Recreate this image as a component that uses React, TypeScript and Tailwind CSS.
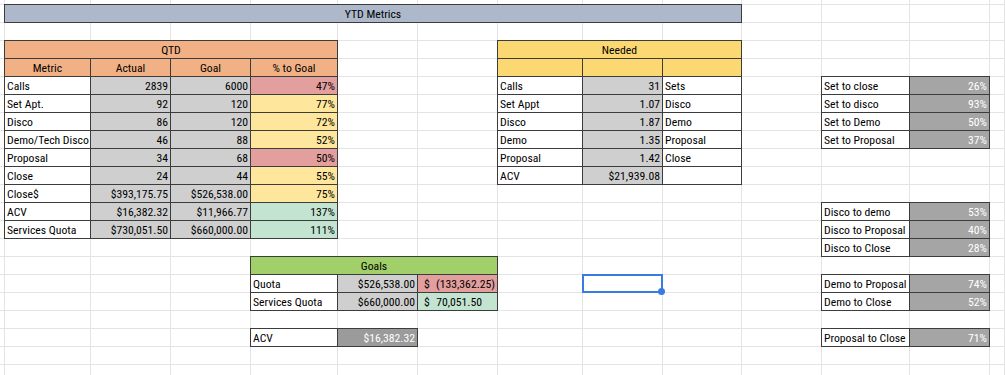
import React from "react";

type Col = "A" | "B" | "C" | "D" | "E" | "F" | "G" | "H" | "I" | "J" | "K" | "L";

// sheet column -> grid column (grid col 1 is the 5px sliver on the left)
const COL: Record<Col, string> = {
  A: "col-start-2",
  B: "col-start-3",
  C: "col-start-4",
  D: "col-start-5",
  E: "col-start-6",
  F: "col-start-7",
  G: "col-start-8",
  H: "col-start-9",
  I: "col-start-10",
  J: "col-start-11",
  K: "col-start-12",
  L: "col-start-13",
};

// sheet row -> grid row (grid row 1 is the 5px sliver on top)
const ROW: Record<number, string> = {
  1: "row-start-2",
  3: "row-start-4",
  4: "row-start-5",
  5: "row-start-6",
  6: "row-start-7",
  7: "row-start-8",
  8: "row-start-9",
  9: "row-start-10",
  10: "row-start-11",
  11: "row-start-12",
  12: "row-start-13",
  13: "row-start-14",
  14: "row-start-15",
  15: "row-start-16",
  16: "row-start-17",
  17: "row-start-18",
  19: "row-start-20",
};

const GRID =
  "grid grid-cols-[5px_86px_80px_80px_87px_80px_80px_85px_80px_79px_80px_88px_80px_1fr] grid-rows-[5px_repeat(21,18px)]";

const GRAY = "bg-[#cfcfcf]";
const DARK = "bg-[#a5a5a5] text-white";
const RED = "bg-[#e39e9e]";
const YELLOW = "bg-[#fee69c]";
const GREEN = "bg-[#c4e4d2]";
const ORANGE = "bg-[#f2b185]";
const GOLD = "bg-[#fcd873]";

type Align = "left" | "right" | "center" | "between";

const JUSTIFY: Record<Align, string> = {
  left: "justify-start",
  right: "justify-end",
  center: "justify-center",
  between: "justify-between",
};

function Cell({
  at,
  bg = "bg-white",
  align = "left",
  className = "px-[2px]",
  children,
}: {
  at: string;
  bg?: string;
  align?: Align;
  className?: string;
  children?: React.ReactNode;
}) {
  return (
    <div
      className={`${at} ${bg} ${JUSTIFY[align]} -ml-px -mt-px flex items-end whitespace-nowrap border border-[#3c3c3c] leading-[16px] ${className}`}
    >
      {children}
    </div>
  );
}

const qtd: [string, string, string, string, string][] = [
  ["Calls", "2839", "6000", "47%", RED],
  ["Set Apt.", "92", "120", "77%", YELLOW],
  ["Disco", "86", "120", "72%", YELLOW],
  ["Demo/Tech Disco", "46", "88", "52%", YELLOW],
  ["Proposal", "34", "68", "50%", RED],
  ["Close", "24", "44", "55%", YELLOW],
  ["Close$", "$393,175.75", "$526,538.00", "75%", YELLOW],
  ["ACV", "$16,382.32", "$11,966.77", "137%", GREEN],
  ["Services Quota", "$730,051.50", "$660,000.00", "111%", GREEN],
];

const needed: [string, string, string][] = [
  ["Calls", "31", "Sets"],
  ["Set Appt", "1.07", "Disco"],
  ["Disco", "1.87", "Demo"],
  ["Demo", "1.35", "Proposal"],
  ["Proposal", "1.42", "Close"],
  ["ACV", "$21,939.08", ""],
];

const ratios: [number, string, string][] = [
  [5, "Set to close", "26%"],
  [6, "Set to disco", "93%"],
  [7, "Set to Demo", "50%"],
  [8, "Set to Proposal", "37%"],
  [12, "Disco to demo", "53%"],
  [13, "Disco to Proposal", "40%"],
  [14, "Disco to Close", "28%"],
  [16, "Demo to Proposal", "74%"],
  [17, "Demo to Close", "52%"],
  [19, "Proposal to Close", "71%"],
];

function Gridlines() {
  const cells = [];
  for (let r = 0; r < 22; r++) {
    for (let c = 0; c < 14; c++) {
      cells.push(<div key={`${r}-${c}`} className="border-b border-r border-[#e4e4e4]" />);
    }
  }
  return <div className={`${GRID} col-start-1 row-start-1`}>{cells}</div>;
}

export default function App() {
  return (
    <div className="h-[375px] w-[1005px] overflow-hidden bg-white font-['Roboto_Condensed','Liberation_Sans',sans-serif] text-[11.7px] text-black">
      <div className="grid">
        <Gridlines />

        <div className={`${GRID} col-start-1 row-start-1`}>
          {/* YTD banner */}
          <Cell at="col-start-2 col-span-9 row-start-2" bg="bg-[#adb9ca]" align="center">
            YTD Metrics
          </Cell>

          {/* QTD table */}
          <Cell at="col-start-2 col-span-4 row-start-4" bg={ORANGE} align="center">
            QTD
          </Cell>
          <Cell at={`${COL.A} ${ROW[4]}`} bg={ORANGE} align="center">Metric</Cell>
          <Cell at={`${COL.B} ${ROW[4]}`} bg={ORANGE} align="center">Actual</Cell>
          <Cell at={`${COL.C} ${ROW[4]}`} bg={ORANGE} align="center">Goal</Cell>
          <Cell at={`${COL.D} ${ROW[4]}`} bg={ORANGE} align="center">% to Goal</Cell>
          {qtd.map(([label, actual, goal, pct, tone], i) => (
            <React.Fragment key={label}>
              <Cell at={`${COL.A} ${ROW[5 + i]}`}>{label}</Cell>
              <Cell at={`${COL.B} ${ROW[5 + i]}`} bg={GRAY} align="right">{actual}</Cell>
              <Cell at={`${COL.C} ${ROW[5 + i]}`} bg={GRAY} align="right">{goal}</Cell>
              <Cell at={`${COL.D} ${ROW[5 + i]}`} bg={tone} align="right">{pct}</Cell>
            </React.Fragment>
          ))}

          {/* Goals */}
          <Cell at="col-start-5 col-span-3 row-start-16" bg="bg-[#a1d06a]" align="center">
            Goals
          </Cell>
          <Cell at={`${COL.D} ${ROW[16]}`}>Quota</Cell>
          <Cell at={`${COL.E} ${ROW[16]}`} bg={GRAY} align="right">$526,538.00</Cell>
          <Cell at={`${COL.F} ${ROW[16]}`} bg={RED} align="between" className="pl-[6px] pr-[2px]">
            <span>$</span>
            <span>(133,362.25)</span>
          </Cell>
          <Cell at={`${COL.D} ${ROW[17]}`}>Services Quota</Cell>
          <Cell at={`${COL.E} ${ROW[17]}`} bg={GRAY} align="right">$660,000.00</Cell>
          <Cell at={`${COL.F} ${ROW[17]}`} bg={GREEN} align="between" className="pl-[6px] pr-[15px]">
            <span>$</span>
            <span>70,051.50</span>
          </Cell>
          <Cell at={`${COL.D} ${ROW[19]}`}>ACV</Cell>
          <Cell at={`${COL.E} ${ROW[19]}`} bg="bg-[#9b9b9b] text-white" align="right">
            $16,382.32
          </Cell>

          {/* Needed */}
          <Cell at="col-start-8 col-span-3 row-start-4" bg={GOLD} align="center">
            Needed
          </Cell>
          <Cell at={`${COL.G} ${ROW[4]}`} bg={GOLD} />
          <Cell at={`${COL.H} ${ROW[4]}`} bg={GOLD} />
          <Cell at={`${COL.I} ${ROW[4]}`} bg={GOLD} />
          {needed.map(([label, val, next], i) => (
            <React.Fragment key={label}>
              <Cell at={`${COL.G} ${ROW[5 + i]}`}>{label}</Cell>
              <Cell at={`${COL.H} ${ROW[5 + i]}`} bg={GRAY} align="right">{val}</Cell>
              <Cell at={`${COL.I} ${ROW[5 + i]}`}>{next}</Cell>
            </React.Fragment>
          ))}

          {/* Conversion ratios */}
          {ratios.map(([r, label, pct]) => (
            <React.Fragment key={label}>
              <Cell at={`${COL.K} ${ROW[r]}`}>{label}</Cell>
              <Cell at={`${COL.L} ${ROW[r]}`} bg={DARK} align="right">{pct}</Cell>
            </React.Fragment>
          ))}

          {/* active cell H16 */}
          <div className="relative col-start-9 row-start-17 -ml-px -mt-px border-2 border-[#3a7be2]">
            <span className="absolute -bottom-[4px] -right-[4px] h-[7px] w-[7px] rounded-full bg-[#3a7be2]" />
          </div>
        </div>
      </div>
    </div>
  );
}
